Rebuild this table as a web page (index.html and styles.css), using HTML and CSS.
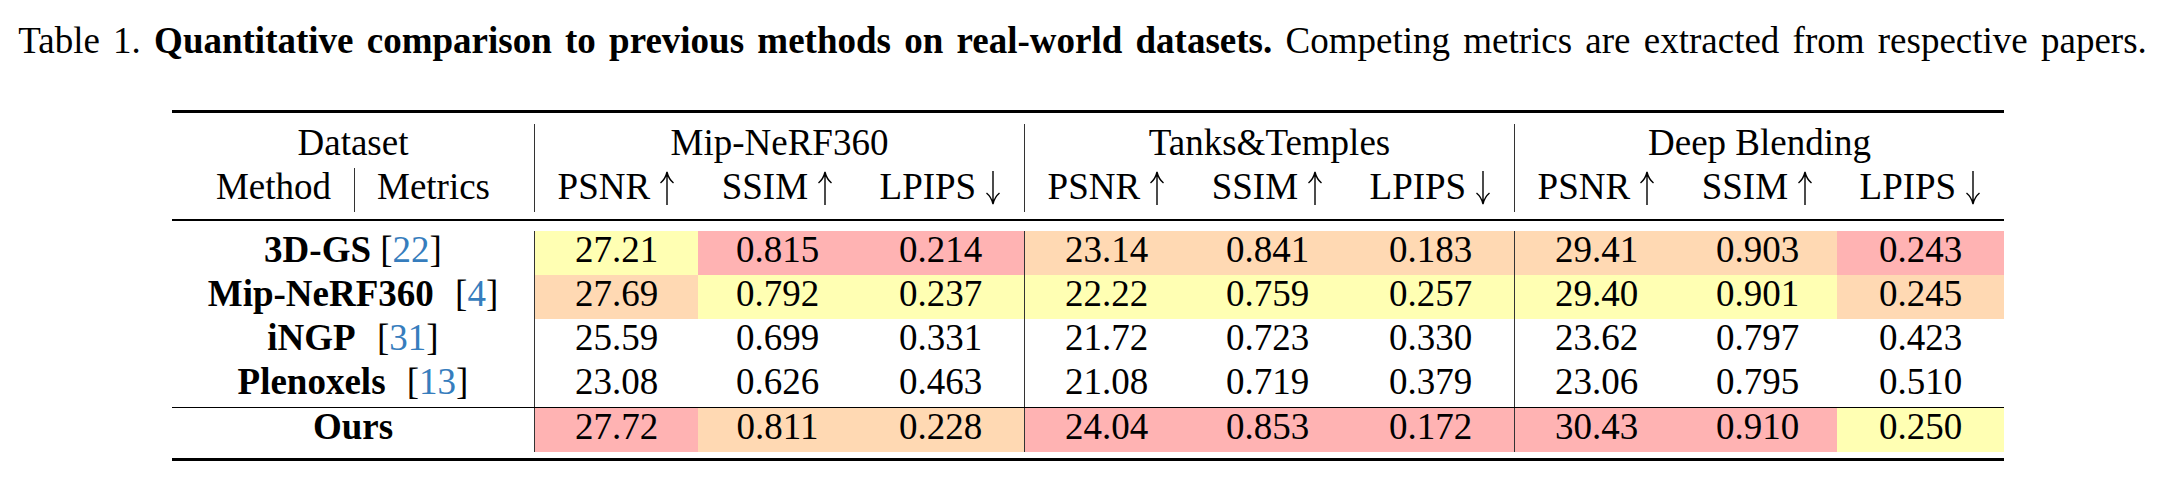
FILE: index.html
```html
<!DOCTYPE html>
<html>
<head>
<meta charset="utf-8">
<link rel="stylesheet" href="styles.css">
</head>
<body>
<p class="caption">Table 1. <b>Quantitative comparison to previous methods on real-world datasets.</b> Competing metrics are extracted from respective papers.</p>
<div class="tbl">
  <div class="rule heavy top"></div>

  <div class="c span2">Dataset</div>
  <div class="c span3 vl">Mip-NeRF360</div>
  <div class="c span3 vl">Tanks&amp;Temples</div>
  <div class="c span3 vl">Deep Blending</div>

  <div class="c right">Method</div>
  <div class="c left bar">Metrics</div>
  <div class="c vl">PSNR <svg class="arr" viewBox="0 0 16 34"><path d="M8 1V34M1.5 12C4.5 9.5 7 5.5 8 1C9 5.5 11.5 9.5 14.5 12"/></svg></div>
  <div class="c">SSIM <svg class="arr" viewBox="0 0 16 34"><path d="M8 1V34M1.5 12C4.5 9.5 7 5.5 8 1C9 5.5 11.5 9.5 14.5 12"/></svg></div>
  <div class="c">LPIPS <svg class="arr" viewBox="0 0 16 34"><path d="M8 0V33M1.5 22C4.5 24.5 7 28.5 8 33C9 28.5 11.5 24.5 14.5 22"/></svg></div>
  <div class="c vl">PSNR <svg class="arr" viewBox="0 0 16 34"><path d="M8 1V34M1.5 12C4.5 9.5 7 5.5 8 1C9 5.5 11.5 9.5 14.5 12"/></svg></div>
  <div class="c">SSIM <svg class="arr" viewBox="0 0 16 34"><path d="M8 1V34M1.5 12C4.5 9.5 7 5.5 8 1C9 5.5 11.5 9.5 14.5 12"/></svg></div>
  <div class="c">LPIPS <svg class="arr" viewBox="0 0 16 34"><path d="M8 0V33M1.5 22C4.5 24.5 7 28.5 8 33C9 28.5 11.5 24.5 14.5 22"/></svg></div>
  <div class="c vl">PSNR <svg class="arr" viewBox="0 0 16 34"><path d="M8 1V34M1.5 12C4.5 9.5 7 5.5 8 1C9 5.5 11.5 9.5 14.5 12"/></svg></div>
  <div class="c">SSIM <svg class="arr" viewBox="0 0 16 34"><path d="M8 1V34M1.5 12C4.5 9.5 7 5.5 8 1C9 5.5 11.5 9.5 14.5 12"/></svg></div>
  <div class="c">LPIPS <svg class="arr" viewBox="0 0 16 34"><path d="M8 0V33M1.5 22C4.5 24.5 7 28.5 8 33C9 28.5 11.5 24.5 14.5 22"/></svg></div>

  <div class="rule mid"></div>

  <div class="c span2"><b>3D-GS</b> <span class="cite">[<span class="num">22</span>]</span></div>
  <div class="c vl y">27.21</div><div class="c r">0.815</div><div class="c r">0.214</div>
  <div class="c vl o">23.14</div><div class="c o">0.841</div><div class="c o">0.183</div>
  <div class="c vl o">29.41</div><div class="c o">0.903</div><div class="c r">0.243</div>

  <div class="c span2"><b>Mip-NeRF360</b> <span class="cite wide">[<span class="num">4</span>]</span></div>
  <div class="c vl o">27.69</div><div class="c y">0.792</div><div class="c y">0.237</div>
  <div class="c vl y">22.22</div><div class="c y">0.759</div><div class="c y">0.257</div>
  <div class="c vl y">29.40</div><div class="c y">0.901</div><div class="c o">0.245</div>

  <div class="c span2"><b>iNGP</b> <span class="cite wide">[<span class="num">31</span>]</span></div>
  <div class="c vl">25.59</div><div class="c">0.699</div><div class="c">0.331</div>
  <div class="c vl">21.72</div><div class="c">0.723</div><div class="c">0.330</div>
  <div class="c vl">23.62</div><div class="c">0.797</div><div class="c">0.423</div>

  <div class="c span2"><b>Plenoxels</b> <span class="cite wide">[<span class="num">13</span>]</span></div>
  <div class="c vl">23.08</div><div class="c">0.626</div><div class="c">0.463</div>
  <div class="c vl">21.08</div><div class="c">0.719</div><div class="c">0.379</div>
  <div class="c vl">23.06</div><div class="c">0.795</div><div class="c">0.510</div>

  <div class="rule thin"></div>

  <div class="c span2"><b>Ours</b></div>
  <div class="c vl r">27.72</div><div class="c o">0.811</div><div class="c o">0.228</div>
  <div class="c vl r">24.04</div><div class="c r">0.853</div><div class="c r">0.172</div>
  <div class="c vl r">30.43</div><div class="c r">0.910</div><div class="c y">0.250</div>

  <div class="rule heavy bottom"></div>
</div>
</body>
</html>
```
FILE: styles.css
```css
html, body {
  margin: 0;
  padding: 0;
  background: #fff;
}
body {
  font-family: "Liberation Serif", "Times New Roman", serif;
  color: #000;
  width: 2171px;
}
.caption {
  font-size: 37px;
  line-height: 40px;
  word-spacing: 4px;
  margin: 21px 0 49px;
  padding-right: 6px;
  text-align: center;
  white-space: nowrap;
}
.caption b {
  font-weight: bold;
}
.tbl {
  display: grid;
  grid-template-columns: 182px 180px repeat(3, 164px 159px 167px);
  width: 1832px;
  margin-left: 172px;
  font-size: 37px;
}
.rule {
  grid-column: 1 / -1;
  background: #000;
}
.rule.heavy {
  height: 3px;
}
.rule.top {
  margin-bottom: 11px;
}
.rule.mid {
  height: 2px;
  margin: 7px 0 10px;
}
.rule.thin {
  height: 1px;
}
.rule.bottom {
  margin-top: 6px;
}
.c {
  box-sizing: border-box;
  height: 44px;
  line-height: 37px;
  padding-bottom: 7px;
  text-align: center;
  white-space: nowrap;
}
.span2 {
  grid-column: span 2;
}
.span3 {
  grid-column: span 3;
}
.vl {
  border-left: 1px solid #333;
}
.right {
  text-align: right;
  padding-right: 23px;
}
.left {
  text-align: left;
  padding-left: 22px;
}
.bar {
  border-left: 1px solid #333;
}
.y {
  background: #ffffb3;
}
.o {
  background: #ffd9b3;
}
.r {
  background: #ffb3b3;
}
.cite .num {
  color: #367dbd;
}
.cite.wide {
  margin-left: 12px;
}
.arr {
  width: 16px;
  height: 34px;
  vertical-align: -6px;
  fill: none;
  stroke: #000;
  stroke-width: 1.4;
}
```
